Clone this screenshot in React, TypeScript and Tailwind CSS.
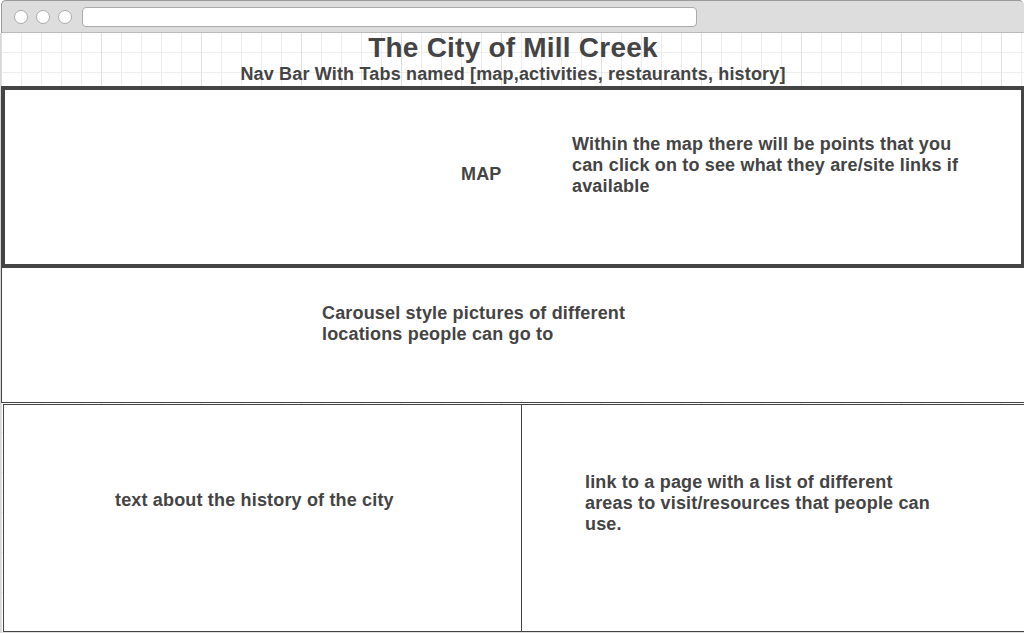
const gridLines =
  "bg-[linear-gradient(to_right,#e0e0e0_1px,transparent_1px),linear-gradient(to_right,#ededed_1px,transparent_1px),linear-gradient(to_bottom,#ededed_1px,transparent_1px)] bg-[size:100px_100px,20px_20px,20px_20px] bg-[position:0_0,0_0,0_-1px]";

function BrowserBar() {
  return (
    <header className="ml-px flex h-[33px] items-center rounded-t-[5px] border border-[#999] border-r-[#ddd] border-b-[#bbb] bg-[#ddd] pl-3">
      <div className="flex gap-2">
        {[0, 1, 2].map((dot) => (
          <span key={dot} className="h-[14px] w-[14px] rounded-full border border-[#aaa] bg-white" />
        ))}
      </div>
      <div className="ml-[10px] mt-px h-5 w-[615px] rounded-[4px] border border-[#aaa] bg-white" />
    </header>
  );
}

export default function App() {
  return (
    <div className="flex h-[633px] w-[1024px] flex-col overflow-hidden bg-white font-['Liberation_Sans',Arial,sans-serif] text-[18px] leading-[21px] font-bold tracking-[0.17px] text-[#444]">
      <BrowserBar />
      <main className={`flex flex-1 flex-col border-l border-[#d8d8d8] ${gridLines}`}>
        <div className="flex h-[53px] flex-col items-center whitespace-nowrap pl-px">
          <h1 className="h-[31px] text-[28px] leading-[29px] tracking-[0.22px]">The City of Mill Creek</h1>
          <p>Nav Bar With Tabs named [map,activities, restaurants, history]</p>
        </div>
        <section className="flex h-[182px] w-[1024px] border-4 border-[#444] bg-white">
          <p className="ml-[456px] mt-[74px] w-[111px] shrink-0">MAP</p>
          <p className="mt-[44px] whitespace-nowrap">
            Within the map there will be points that you
            <br />
            can click on to see what they are/site links if
            <br />
            available
          </p>
        </section>
        <section className="h-[135px] border-b border-l border-[#444] bg-white pt-[35px] pl-[320px]">
          <p className="whitespace-nowrap">
            Carousel style pictures of different
            <br />
            locations people can go to
          </p>
        </section>
        <section className="mt-px ml-[2px] flex h-[228px] border-y border-l border-[#444] bg-white">
          <div className="w-[518px] shrink-0 border-r border-[#444] pt-[85px] pl-[111px]">
            <p>text about the history of the city</p>
          </div>
          <p className="pt-[67px] pl-[63px] whitespace-nowrap">
            link to a page with a list of different
            <br />
            areas to visit/resources that people can
            <br />
            use.
          </p>
        </section>
        <div className="h-px bg-[#e0e0e0]" />
      </main>
    </div>
  );
}
